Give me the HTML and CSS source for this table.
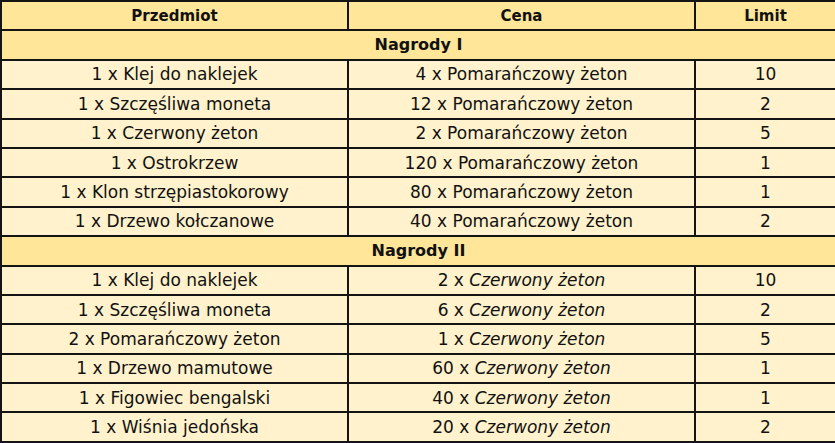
FILE: index.html
```html
<!DOCTYPE html>
<html lang="pl">
<head>
<meta charset="utf-8">
<link rel="stylesheet" href="styles.css">
</head>
<body>
<table class="rewards">
  <colgroup>
    <col class="c-item">
    <col class="c-price">
    <col class="c-limit">
  </colgroup>
  <thead>
    <tr class="head"><th>Przedmiot</th><th>Cena</th><th>Limit</th></tr>
  </thead>
  <tbody>
    <tr class="section"><th colspan="3">Nagrody I</th></tr>
    <tr><td>1 x Klej do naklejek</td><td>4 x Pomarańczowy żeton</td><td>10</td></tr>
    <tr><td>1 x Szczęśliwa moneta</td><td>12 x Pomarańczowy żeton</td><td>2</td></tr>
    <tr><td>1 x Czerwony żeton</td><td>2 x Pomarańczowy żeton</td><td>5</td></tr>
    <tr><td>1 x Ostrokrzew</td><td>120 x Pomarańczowy żeton</td><td>1</td></tr>
    <tr><td>1 x Klon strzępiastokorowy</td><td>80 x Pomarańczowy żeton</td><td>1</td></tr>
    <tr><td>1 x Drzewo kołczanowe</td><td>40 x Pomarańczowy żeton</td><td>2</td></tr>
    <tr class="section"><th colspan="3">Nagrody II</th></tr>
    <tr><td>1 x Klej do naklejek</td><td>2 x <i>Czerwony żeton</i></td><td>10</td></tr>
    <tr><td>1 x Szczęśliwa moneta</td><td>6 x <i>Czerwony żeton</i></td><td>2</td></tr>
    <tr><td>2 x Pomarańczowy żeton</td><td>1 x <i>Czerwony żeton</i></td><td>5</td></tr>
    <tr><td>1 x Drzewo mamutowe</td><td>60 x <i>Czerwony żeton</i></td><td>1</td></tr>
    <tr><td>1 x Figowiec bengalski</td><td>40 x <i>Czerwony żeton</i></td><td>1</td></tr>
    <tr><td>1 x Wiśnia jedońska</td><td>20 x <i>Czerwony żeton</i></td><td>2</td></tr>
  </tbody>
</table>
</body>
</html>
```
FILE: styles.css
```css
html, body {
  margin: 0;
  padding: 0;
  background: #ffffff;
}
.rewards {
  border-collapse: collapse;
  width: 835px;
  table-layout: fixed;
  font-family: "Comic Sans MS", "DejaVu Sans", sans-serif;
  font-size: 17px;
  color: #111111;
}
.c-item { width: 347px; }
.c-price { width: 347px; }
.c-limit { width: 141px; }
.rewards th,
.rewards td {
  border: 2px solid #141414;
  height: 27.4px;
  padding: 0;
  text-align: center;
  vertical-align: middle;
  line-height: 18px;
}
.rewards th {
  background: #ffe699;
  font-weight: bold;
}
.head th {
  font-size: 15px;
}
.section th {
  font-size: 16px;
}
.rewards td {
  background: #fff2cc;
  font-weight: normal;
}
.rewards i {
  font-style: italic;
}
```
